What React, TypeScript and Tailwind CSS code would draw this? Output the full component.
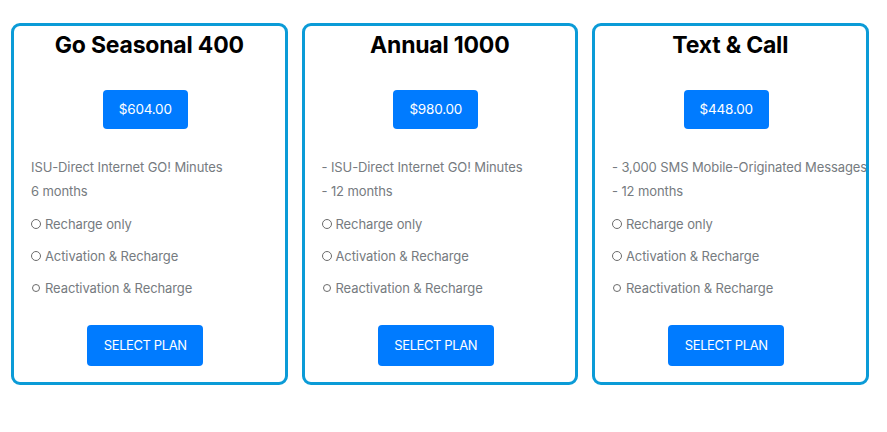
import React from 'react';

interface Plan {
  title: string;
  price: string;
  lines: string[];
}

const plans: Plan[] = [
  { title: 'Go Seasonal 400', price: '$604.00', lines: ['ISU-Direct Internet GO! Minutes', '6 months'] },
  { title: 'Annual 1000', price: '$980.00', lines: ['- ISU-Direct Internet GO! Minutes', '- 12 months'] },
  { title: 'Text & Call', price: '$448.00', lines: ['- 3,000 SMS Mobile-Originated Messages', '- 12 months'] },
];

const options = ['Recharge only', 'Activation & Recharge', 'Reactivation & Recharge'];

const PlanCard: React.FC<{ plan: Plan }> = ({ plan }) => (
  <div className="w-[276.5px] h-[362px] shrink-0 overflow-hidden rounded-[9px] border-[3px] border-[#0b9bd7] bg-white pt-[5px] pl-[17px] pr-[17px]">
    <h2 className="text-center text-[23px] leading-[29px] font-bold text-black tracking-[-0.2px]">{plan.title}</h2>

    <div className="flex justify-center pr-2 mt-[30px]">
      <button className="h-[39px] w-[85px] rounded bg-[#007bff] text-white text-[13.5px] tracking-[-0.2px]">{plan.price}</button>
    </div>

    <div className="mt-[26px] text-[13px] leading-[24px] tracking-[-0.1px] text-[#767b80] whitespace-nowrap">
      {plan.lines.map((l) => (
        <p key={l}>{l}</p>
      ))}
    </div>

    <div className="mt-[9px] flex flex-col gap-2 text-[13px] leading-[24px] tracking-[-0.1px] text-[#767b80] whitespace-nowrap">
      {options.map((o, i) => (
        <label key={o} className="flex items-center gap-[4px]">
          <span
            className={`shrink-0 rounded-full border border-[#6b6b6b] ${i === 2 ? 'w-[8px] h-[8px] ml-[1px] mr-[1px]' : 'w-[10px] h-[10px]'}`}
          />
          {o}
        </label>
      ))}
    </div>

    <div className="flex justify-center pr-2 mt-[25px]">
      <button className="h-[41px] w-[116px] rounded bg-[#007bff] text-white text-[13px] uppercase tracking-[-0.4px]">Select Plan</button>
    </div>
  </div>
);

export default function App() {
  return (
    <div className="w-[887px] h-[432px] bg-white pt-[23px] pl-[11px]" style={{ fontFamily: 'Inter, "Liberation Sans", sans-serif' }}>
      <div className="flex gap-[14px]">
        {plans.map((p) => (
          <PlanCard key={p.title} plan={p} />
        ))}
      </div>
    </div>
  );
}
